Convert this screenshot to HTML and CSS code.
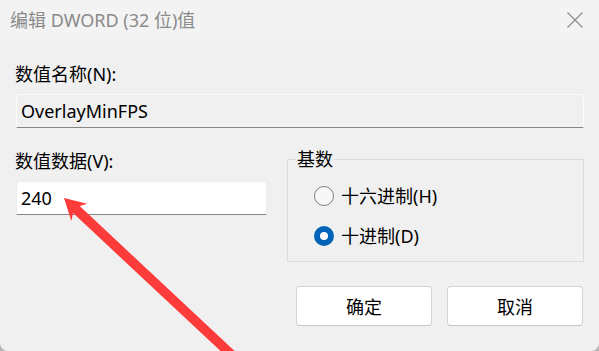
FILE: index.html
```html
<!DOCTYPE html>
<html lang="zh-CN">
<head>
  <meta charset="UTF-8">
  <meta name="viewport" content="width=device-width, initial-scale=1.0">
  <title>编辑 DWORD (32 位)值</title>
  <link rel="stylesheet" href="styles.css">
</head>
<body>
  <div class="window">
    <div class="titlebar">
      <span class="title">编辑 DWORD (32 位)值</span>
      <svg class="close" width="16" height="16" viewBox="0 0 16 16">
        <path d="M0.5 0.5 L15.5 15.5 M15.5 0.5 L0.5 15.5" stroke="#8a8a8a" stroke-width="1.1" fill="none"/>
      </svg>
    </div>

    <div class="content">
      <label class="label" for="name">数值名称(N):</label>
      <div class="textbox disabled" id="name">OverlayMinFPS</div>

      <div class="row">
        <div class="col">
          <label class="label" for="data">数值数据(V):</label>
          <div class="textbox" id="data">240</div>
        </div>

        <fieldset class="group">
          <legend>基数</legend>
          <div class="radio">
            <span class="dot"></span>
            <span>十六进制(H)</span>
          </div>
          <div class="radio checked">
            <span class="dot"></span>
            <span>十进制(D)</span>
          </div>
        </fieldset>
      </div>

      <div class="buttons">
        <button class="btn">确定</button>
        <button class="btn">取消</button>
      </div>
    </div>

    <!-- annotation arrow -->
    <svg class="arrow" width="599" height="351" viewBox="0 0 599 351">
      <polygon points="64,198 87.3,203.8 79.7,206.1 242.5,358.4 235.9,365.4 73.1,213.1 71.3,220.9" fill="#fe3b3b"/>
    </svg>
  </div>
</body>
</html>
```

FILE: styles.css
```css
html, body {
  margin: 0;
  padding: 0;
  background: #b4b4b4;
}
body {
  font-family: "Noto Sans", "Noto Sans CJK SC", sans-serif;
  font-size: 18px;
  color: #000;
}
.window {
  position: relative;
  width: 599px;
  height: 351px;
  background: #f0f0f0;
  border-radius: 0 0 8px 8px;
  overflow: hidden;
}
.titlebar {
  height: 40px;
  background: #f3f3f3;
  display: flex;
  align-items: center;
  justify-content: space-between;
  padding: 0 16px 0 10px;
}
.title {
  color: #8a8a8a;
  line-height: 24px;
}
.close {
  display: block;
}
.content {
  padding: 22px 15px 0 16px;
}
.label {
  display: block;
  line-height: 24px;
  margin-left: -1px;
}
.textbox {
  height: 32px;
  margin-top: 8px;
  padding: 0 4px;
  line-height: 32px;
  background: #fff;
  border: 1px solid #ececec;
  border-bottom-color: #868686;
  border-radius: 3px 3px 0 0;
}
.textbox.disabled {
  background: #f0f0f0;
  border-color: #fbfbfb;
  border-bottom-color: #868686;
}
.row {
  display: grid;
  grid-template-columns: 251px 297px;
  gap: 20px;
  margin-top: 21px;
}
.group {
  margin: -2px 0 0 0;
  padding: 0 0 13px 26px;
  border: 1px solid #dcdcdc;
  min-width: 0;
}
.group legend {
  padding: 0 1px;
  margin-left: -18px;
  line-height: 24px;
}
.radio {
  display: flex;
  align-items: center;
  gap: 7px;
  line-height: 24px;
  margin-top: 13px;
}
.radio + .radio {
  margin-top: 16px;
}
.dot {
  width: 18px;
  height: 18px;
  border: 1px solid #7f7f7f;
  border-radius: 50%;
  background: #f7f7f7;
  box-sizing: content-box;
}
.radio.checked .dot {
  width: 8px;
  height: 8px;
  border: 6px solid #0063b8;
  background: #fff;
}
.buttons {
  display: flex;
  justify-content: flex-end;
  gap: 15px;
  margin-top: 24px;
  margin-right: 1px;
}
.btn {
  width: 136px;
  height: 40px;
  font: inherit;
  color: #000;
  background: #fff;
  border: 1px solid #d3d3d3;
  border-bottom-color: #c4c4c4;
  border-radius: 4px;
}
.arrow {
  position: absolute;
  left: 0;
  top: 0;
  pointer-events: none;
}
```
